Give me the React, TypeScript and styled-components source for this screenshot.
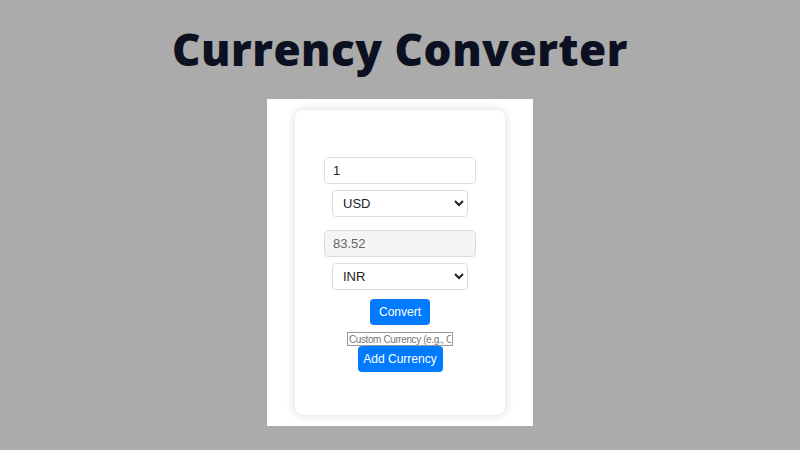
import styled, { createGlobalStyle } from "styled-components";

const GlobalStyle = createGlobalStyle`
  body {
    margin: 0;
    background: #ababab;
    font-family: "Liberation Sans", Arial, sans-serif;
  }
`;

const Page = styled.main`
  display: flex;
  flex-direction: column;
  align-items: center;
  height: 450px;
`;

const Title = styled.h1`
  margin: 18px 0 0;
  height: 81px;
  font-family: "Open Sans", sans-serif;
  font-weight: 800;
  font-size: 44px;
  line-height: 62px;
  color: #0b1120;
  letter-spacing: 0.5px;
`;

const Panel = styled.section`
  width: 266px;
  height: 327px;
  background: #fff;
  padding: 11px 28px;
  box-sizing: border-box;
`;

const Card = styled.div`
  height: 305px;
  background: #fff;
  border-radius: 8px;
  box-shadow: 0 0 10px rgba(0, 0, 0, 0.15);
  display: flex;
  flex-direction: column;
  align-items: center;
  padding-top: 47px;
  box-sizing: border-box;
`;

const Field = styled.input<{ $muted?: boolean }>`
  width: 152px;
  height: 27px;
  box-sizing: border-box;
  border: 1px solid #ddd;
  border-radius: 4px;
  padding: 0 8px;
  font: 13px "Liberation Sans", Arial, sans-serif;
  color: ${(p) => (p.$muted ? "#666" : "#222")};
  background: ${(p) => (p.$muted ? "#f5f5f5" : "#fff")};
  margin: 0;
`;

const Picker = styled.select<{ $gapAfter?: number }>`
  width: 136px;
  height: 27px;
  box-sizing: border-box;
  margin: 6px 0 ${(p) => p.$gapAfter ?? 0}px;
  border: 1px solid #ddd;
  border-radius: 4px;
  padding: 0 6px;
  font: 13px "Liberation Sans", Arial, sans-serif;
  color: #222;
  background: #fff;
`;

const Button = styled.button<{ $w: number; $top: number }>`
  width: ${(p) => p.$w}px;
  height: 26px;
  margin-top: ${(p) => p.$top}px;
  padding: 0;
  white-space: nowrap;
  border: none;
  border-radius: 4px;
  background: #007bff;
  color: #fff;
  font: 12px "Liberation Sans", Arial, sans-serif;
  cursor: pointer;
`;

const SmallField = styled.input`
  width: 106px;
  height: 14px;
  box-sizing: border-box;
  margin: 7px 0 0;
  padding: 0 1px;
  border: 1px solid #999;
  font: 10px "Liberation Sans", Arial, sans-serif;
  letter-spacing: -0.4px;
  color: #555;
  &::placeholder {
    color: #777;
  }
`;

export default function App() {
  return (
    <>
      <GlobalStyle />
      <Page>
        <Title>Currency Converter</Title>
        <Panel>
          <Card>
            <Field type="number" defaultValue="1" />
            <Picker defaultValue="USD" $gapAfter={13}>
              <option>USD</option>
              <option>EUR</option>
              <option>INR</option>
            </Picker>
            <Field $muted readOnly value="83.52" />
            <Picker defaultValue="INR">
              <option>USD</option>
              <option>EUR</option>
              <option>INR</option>
            </Picker>
            <Button $w={60} $top={9}>Convert</Button>
            <SmallField placeholder="Custom Currency (e.g., CAD)" />
            <Button $w={85} $top={0}>Add Currency</Button>
          </Card>
        </Panel>
      </Page>
    </>
  );
}
